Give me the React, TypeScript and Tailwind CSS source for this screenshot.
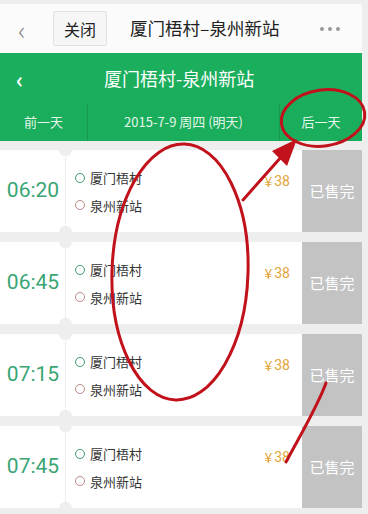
const cjk = { fontFamily: '"Noto Sans CJK SC", "Noto Sans", sans-serif' };

type Trip = { time: string; from: string; to: string; price: string };

const trips: Trip[] = [
  { time: "06:20", from: "厦门梧村", to: "泉州新站", price: "38" },
  { time: "06:45", from: "厦门梧村", to: "泉州新站", price: "38" },
  { time: "07:15", from: "厦门梧村", to: "泉州新站", price: "38" },
  { time: "07:45", from: "厦门梧村", to: "泉州新站", price: "38" },
];

function TripCard({ trip }: { trip: Trip }) {
  return (
    <div className="flex h-[82px] shrink-0 bg-white">
      <div className="flex w-[65px] items-center justify-center pl-[1px]">
        <span
          className="text-[21px] text-[#3aa574]"
          style={{ fontFamily: "Roboto, sans-serif" }}
        >
          {trip.time}
        </span>
      </div>
      {/* dotted divider with ticket notches */}
      <div className="relative w-0 border-l border-dotted border-[#dddddd]">
        <span className="absolute -top-[6px] -left-[7px] h-[12px] w-[13px] rounded-full bg-[#eeeeee]" />
        <span className="absolute -bottom-[6px] -left-[7px] h-[12px] w-[13px] rounded-full bg-[#eeeeee]" />
      </div>
      <div className="flex flex-1 flex-col justify-center gap-[8px] pl-[9px] pt-[1px] text-[13px] text-[#333333]">
        <div className="flex items-center gap-[5px]">
          <span className="h-[10px] w-[10px] rounded-full border-[1.5px] border-[#3a9d6c]" />
          <span>{trip.from}</span>
        </div>
        <div className="flex items-center gap-[5px]">
          <span className="h-[10px] w-[10px] rounded-full border-[1.5px] border-[#b88a82]" />
          <span>{trip.to}</span>
        </div>
      </div>
      <div className="flex w-[60px] items-start justify-end pr-[12px] pt-[21px] text-[14px] text-[#e2a43a]">
        ¥<span className="ml-[2px]" style={{ fontFamily: "Roboto, sans-serif" }}>{trip.price}</span>
      </div>
      <div className="flex w-[60px] items-center justify-center bg-[#c3c3c3] text-[15px] text-white">
        已售完
      </div>
    </div>
  );
}

function Annotations() {
  return (
    <svg
      className="pointer-events-none absolute inset-0"
      width="368"
      height="514"
      viewBox="0 0 368 514"
    >
      <g fill="none" stroke="#c1121c" strokeWidth="3" strokeLinecap="round">
        <ellipse cx="180" cy="272" rx="68" ry="128" transform="rotate(2 180 272)" />
        <ellipse cx="323" cy="118" rx="42" ry="28" transform="rotate(-8 323 118)" />
        <path d="M243 200 L282 156" />
        <path d="M326 383 C318 405 306 425 286 462" />
      </g>
      <polygon points="297,139 272,151 287,166" fill="#c1121c" />
    </svg>
  );
}

export default function App() {
  return (
    <div
      className="relative flex h-[514px] w-[368px] flex-col overflow-hidden bg-[#eeeeee] pr-[6px] pt-[4px]"
      style={cjk}
    >
      {/* browser top bar */}
      <div className="flex h-[49px] shrink-0 items-center bg-[#fbfbfb]">
        <span className="ml-[18px] w-[22px] text-[26px] font-extralight leading-none text-[#888888]">
          ‹
        </span>
        <button className="ml-[13px] flex h-[35px] w-[54px] items-center justify-center rounded-[2px] border border-[#e2e2e2] bg-[#f6f6f6] text-[16px] text-[#222222]">
          关闭
        </button>
        <span className="ml-[23px] text-[17.5px] text-[#222222]">厦门梧村–泉州新站</span>
        <div className="ml-auto mr-[22px] flex gap-[4px]">
          <span className="h-[4px] w-[4px] rounded-full bg-[#999999]" />
          <span className="h-[4px] w-[4px] rounded-full bg-[#999999]" />
          <span className="h-[4px] w-[4px] rounded-full bg-[#999999]" />
        </div>
      </div>

      {/* green header */}
      <div className="flex h-[50px] shrink-0 items-center bg-[#1bae5c] text-white">
        <span className="ml-[16px] w-[20px] text-[22px] font-bold leading-none">‹</span>
        <span className="ml-[68px] text-[18px]">厦门梧村-泉州新站</span>
      </div>
      <div className="flex h-[38px] shrink-0 items-center bg-[#1aad5b] text-[13px] text-[#e6f6ec]">
        <div className="flex h-full w-[88px] items-center justify-center border-r border-[#159a4f]">
          前一天
        </div>
        <div className="flex h-full w-[192px] items-center justify-center border-r border-[#159a4f]">
          2015-7-9 周四 (明天)
        </div>
        <div className="flex h-full flex-1 items-center justify-center">后一天</div>
      </div>

      <div className="flex flex-col gap-[10px] pt-[9px]">
        {trips.map((t) => (
          <TripCard key={t.time} trip={t} />
        ))}
      </div>

      <Annotations />
    </div>
  );
}
